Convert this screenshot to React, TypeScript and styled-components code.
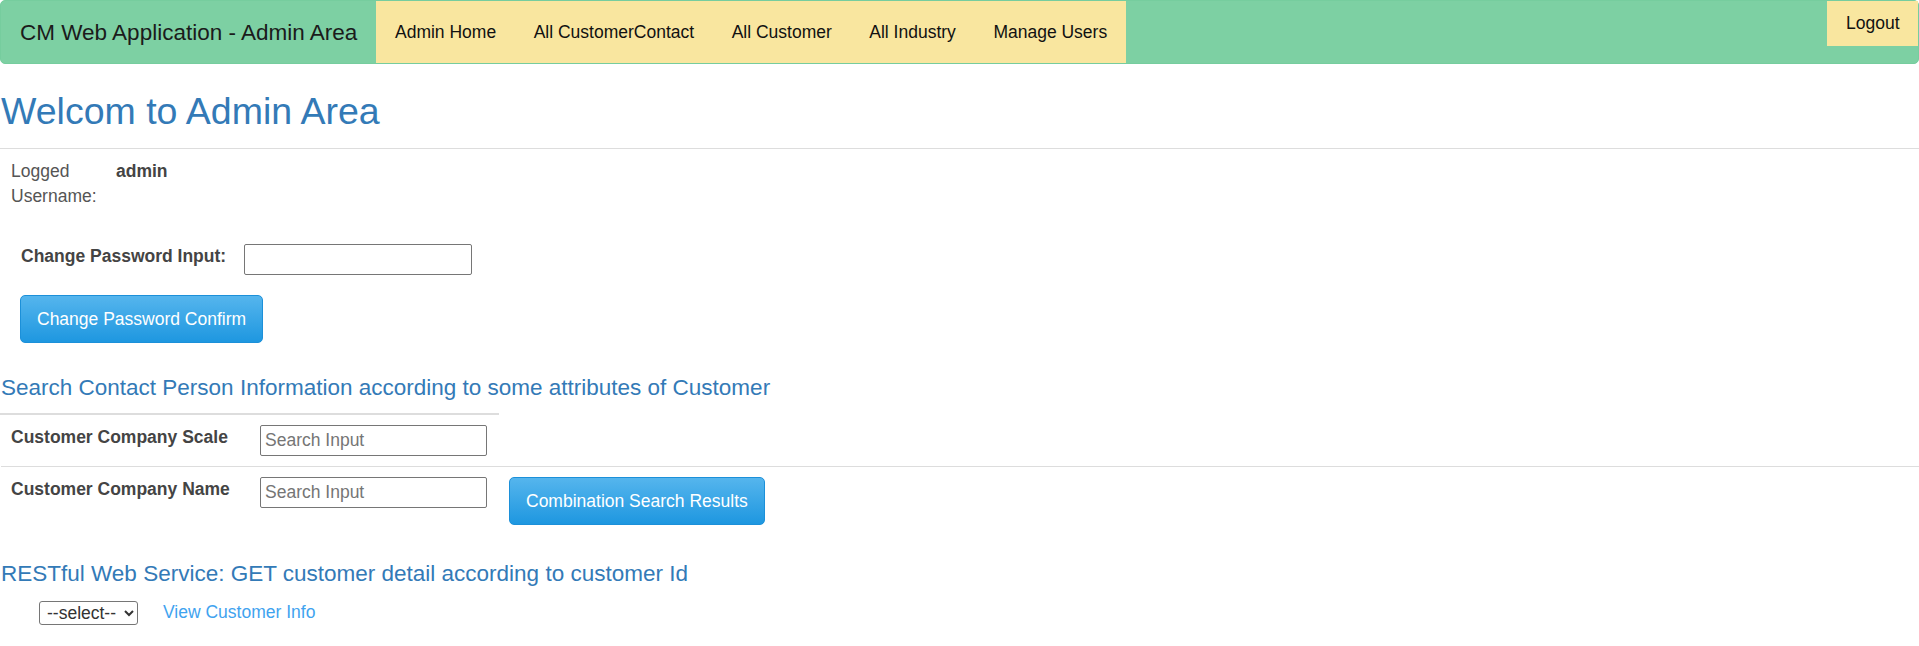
import React from "react";
import styled, { createGlobalStyle } from "styled-components";

const GlobalStyle = createGlobalStyle`
  html, body {
    margin: 0;
    padding: 0;
    background: #ffffff;
  }
  body {
    font-family: "Liberation Sans", Arial, Helvetica, sans-serif;
    font-size: 17.5px;
    line-height: 25px;
    color: #444;
  }
  *, *::before, *::after {
    box-sizing: border-box;
  }
`;

const Navbar = styled.nav`
  display: flex;
  align-items: stretch;
  height: 64px;
  background: #7dd0a3;
  border: 1px solid #76cd9e;
  border-radius: 5px;
`;

const Brand = styled.a`
  display: flex;
  align-items: center;
  padding: 0 19px 0 19px;
  font-size: 22.5px;
  color: #1b1b1b;
  text-decoration: none;
`;

const NavList = styled.ul`
  display: flex;
  margin: 0;
  padding: 0;
  list-style: none;
  background: #f9e69f;
`;

const NavItem = styled.li`
  display: flex;
`;

const NavLink = styled.a`
  display: flex;
  align-items: center;
  padding: 0 18.75px;
  color: #111;
  text-decoration: none;
`;

const RightNav = styled.a`
  margin-left: auto;
  align-self: flex-start;
  padding: 10px 18.5px;
  line-height: 25px;
  background: #f9e69f;
  color: #111;
  text-decoration: none;
`;

const Page = styled.main`
  padding-left: 1px;
`;

const Title = styled.h1`
  margin: 27px 0 16px;
  font-size: 37.5px;
  line-height: 41px;
  font-weight: 400;
  color: #337ab7;
`;

const InfoTable = styled.div`
  display: grid;
  grid-template-columns: 87px auto;
  column-gap: 18px;
  border-top: 1px solid #dddddd;
  margin-left: -1px;
  padding: 10px 0 10px 11px;
`;

const InfoLabel = styled.div`
  color: #555;
`;

const InfoValue = styled.div`
  font-weight: 700;
  color: #444;
`;

const PasswordRow = styled.div`
  display: flex;
  align-items: flex-start;
  gap: 18px;
  margin-top: 25px;
  padding-left: 20px;
`;

const FieldLabel = styled.label`
  font-weight: 700;
  color: #444;
  line-height: 25px;
`;

const TextInput = styled.input<{ $w: number }>`
  width: ${(p) => p.$w}px;
  height: 31px;
  margin: 0;
  padding: 1px 4px;
  border: 1px solid #767676;
  border-radius: 2px;
  font-family: "Liberation Sans", Arial, sans-serif;
  font-size: 17.5px;
  color: #333;
  background: #fff;
  &::placeholder {
    color: #757575;
  }
`;

const PrimaryButton = styled.button<{ $block?: boolean }>`
  display: ${(p) => (p.$block ? "block" : "inline-block")};
  height: 48px;
  margin: ${(p) => (p.$block ? "20px 0 0 19px" : "0")};
  padding: 0 16px;
  border: 1px solid #1c90d9;
  border-radius: 5px;
  background: linear-gradient(to bottom, #55b5ed 0%, #1e97e0 100%);
  color: #ffffff;
  font-family: "Liberation Sans", Arial, sans-serif;
  font-size: 17.5px;
  white-space: nowrap;
  cursor: pointer;
`;

const SectionTitle = styled.h4<{ $top: number; $bottom: number }>`
  margin: ${(p) => p.$top}px 0 ${(p) => p.$bottom}px;
  font-size: 22.5px;
  line-height: 25px;
  font-weight: 400;
  color: #337ab7;
`;

const ThickRule = styled.div`
  width: 499px;
  height: 2px;
  margin-left: -1px;
  background: #dddddd;
`;

const SearchRow = styled.div<{ $divided?: boolean }>`
  display: grid;
  grid-template-columns: 249px 249px auto;
  align-items: start;
  padding: 10px 0;
  border-top: ${(p) => (p.$divided ? "1px solid #dddddd" : "none")};
`;

const Cell = styled.div`
  padding: 0 10px;
`;

const SearchLabel = styled.div`
  font-weight: 700;
  color: #444;
`;

const SelectRow = styled.div`
  display: flex;
  align-items: center;
  gap: 25px;
  padding-left: 38px;
`;

const Select = styled.select`
  width: 99px;
  height: 24px;
  padding: 0 0 0 3px;
  border: 1px solid #767676;
  border-radius: 3px;
  background: #fff;
  color: #333;
  font-family: "Liberation Sans", Arial, sans-serif;
  font-size: 17.5px;
`;

const InfoLink = styled.a`
  color: #3fa3ef;
  text-decoration: none;
`;

const navItems = [
  "Admin Home",
  "All CustomerContact",
  "All Customer",
  "All Industry",
  "Manage Users",
];

const searchRows = [
  { label: "Customer Company Scale", action: false },
  { label: "Customer Company Name", action: true },
];

export default function App() {
  return (
    <>
      <GlobalStyle />
      <Navbar>
        <Brand href="#">CM Web Application - Admin Area</Brand>
        <NavList>
          {navItems.map((item) => (
            <NavItem key={item}>
              <NavLink href="#">{item}</NavLink>
            </NavItem>
          ))}
        </NavList>
        <RightNav href="#">Logout</RightNav>
      </Navbar>
      <Page>
        <Title>Welcom to Admin Area</Title>
        <InfoTable>
          <InfoLabel>Logged Username:</InfoLabel>
          <InfoValue>admin</InfoValue>
        </InfoTable>
        <PasswordRow>
          <FieldLabel>Change Password Input:</FieldLabel>
          <TextInput $w={228} type="password" />
        </PasswordRow>
        <PrimaryButton $block>Change Password Confirm</PrimaryButton>

        <SectionTitle $top={32} $bottom={13}>
          Search Contact Person Information according to some attributes of Customer
        </SectionTitle>
        <ThickRule />
        {searchRows.map((row, i) => (
          <SearchRow key={row.label} $divided={i > 0}>
            <Cell>
              <SearchLabel>{row.label}</SearchLabel>
            </Cell>
            <Cell>
              <TextInput $w={227} placeholder="Search Input" />
            </Cell>
            <Cell>
              {row.action && <PrimaryButton>Combination Search Results</PrimaryButton>}
            </Cell>
          </SearchRow>
        ))}

        <SectionTitle $top={26} $bottom={14}>
          RESTful Web Service: GET customer detail according to customer Id
        </SectionTitle>
        <SelectRow>
          <Select defaultValue="">
            <option value="">--select--</option>
          </Select>
          <InfoLink href="#">View Customer Info</InfoLink>
        </SelectRow>
      </Page>
    </>
  );
}
